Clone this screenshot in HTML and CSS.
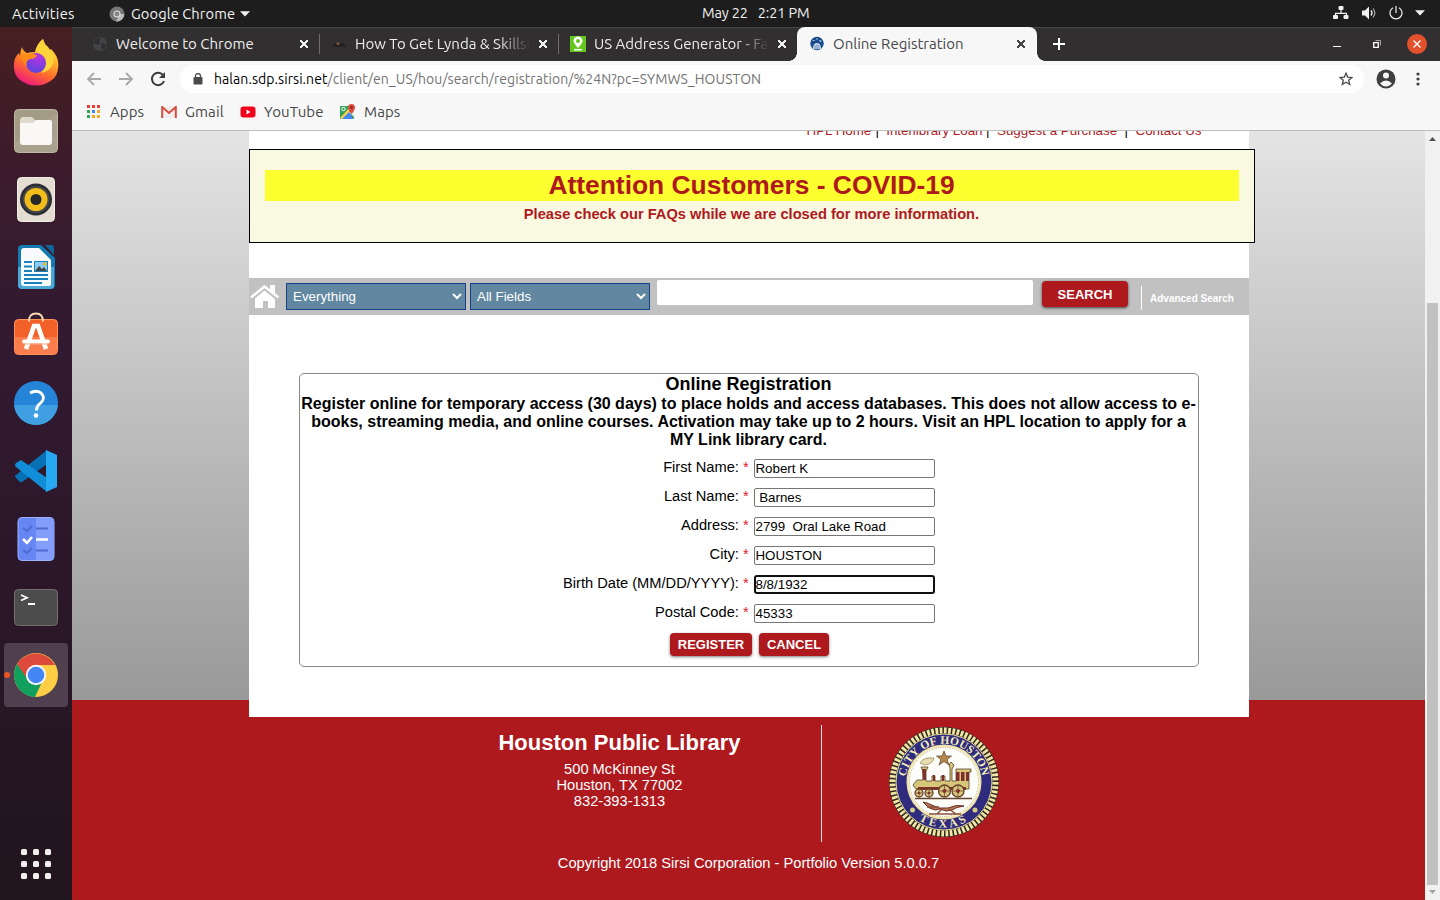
FILE: index.html
```html
<!DOCTYPE html>
<html lang="en">
<head>
<meta charset="utf-8">
<title>Online Registration</title>
<link rel="stylesheet" href="styles.css">
</head>
<body>
<header class="topbar">
  <span class="activities">Activities</span>
  <div class="appmenu">
    <svg width="16" height="16" viewBox="0 0 16 16"><circle cx="8" cy="8" r="7.5" fill="#777"/><path d="M8 8h7.3A7.5 7.5 0 0 1 7 15.4L10 10z" fill="#bbb"/><circle cx="8" cy="8" r="3.5" fill="#ddd"/><circle cx="8" cy="8" r="2.4" fill="#858585"/></svg>
    <span class="appname">Google Chrome</span>
    <svg width="10" height="6" viewBox="0 0 10 6"><path d="M0 .3h10L5 5.6z" fill="#f2f2f2"/></svg>
  </div>
  <div class="clock"><span>May 22</span><span>2:21 PM</span></div>
  <div class="tray">
    <svg width="16" height="14" viewBox="0 0 16 14"><path d="M8 3v4M2.5 11V7.3h11V11" fill="none" stroke="#f2f2f2" stroke-width="1.2"/><g fill="#f2f2f2"><rect x="5.5" y="0" width="5" height="4" rx="1"/><rect x="0" y="9" width="5" height="4" rx="1"/><rect x="10.500" y="9" width="5" height="4" rx="1"/></g></svg>
    <svg width="16" height="14" viewBox="0 0 16 14"><path d="M1 4.500h3L8 .500v13L4 9.500H1z" fill="#f2f2f2"/><path d="M10 4.500q2 2.500 0 5" fill="none" stroke="#f2f2f2" stroke-width="1.300"/><path d="M12 2.500q3.600 4.500 0 9" fill="none" stroke="#aaa" stroke-width="1.200"/></svg>
    <svg width="14" height="14" viewBox="0 0 14 14"><path d="M4 1.700a6 6 0 1 0 6 0M7 0v7" fill="none" stroke="#f2f2f2" stroke-width="1.200"/></svg>
    <svg width="10" height="6" viewBox="0 0 10 6"><path d="M0 .3h10L5 5.600z" fill="#f2f2f2"/></svg>
  </div>
</header>
<div class="desktop">
<aside class="dock">
  <div class="tile"><svg width="46" height="48" viewBox="0 0 46 48">
    <defs><linearGradient id="fx" x1=".8" y1="0" x2=".3" y2="1"><stop offset="0" stop-color="#fff44f"/><stop offset=".35" stop-color="#ffb52a"/><stop offset=".65" stop-color="#ff6b2c"/><stop offset="1" stop-color="#ee1780"/></linearGradient><radialGradient id="fp" cx=".6" cy=".2" r=".8"><stop offset="0" stop-color="#b833e1"/><stop offset="1" stop-color="#5b45dd"/></radialGradient></defs>
    <path d="M9 8q1 4 5 6 4-1 8-1Q23 6 30 0q1 5 5 8l1 4 2-2q9 9 7 19a22 17.500 0 0 1-44 0Q0 19 6 14l1 3q0-5 2-9z" fill="url(#fx)"/>
    <path d="M30 0q1 5 5 8 7 8 5 16t-12 10q8-9 3-17l-8-5q1-7 7-12z" fill="#ffd43a"/>
    <circle cx="23" cy="24" r="10" fill="url(#fp)"/><path d="M7 17q9-4 17-1-1 4-7 4-5 2-3 8-5-6-7-11z" fill="#ff8a16"/></svg></div>
  <div class="tile"><svg width="44" height="44" viewBox="0 0 44 44"><rect x=".5" y=".5" width="43" height="43" rx="4" fill="#a39b86" stroke="#bdb7a5"/><path d="M1 34 43 4v35q0 4-4 4H5q-4 0-4-4z" fill="#b1aa98" opacity=".5"/><path d="M6 12q0-4 3-4h9l4 4h10v6H6z" fill="#dedacd"/><path d="M6 14h13l3-3h14q2 0 2 2v20q0 3-3 3H9q-3 0-3-3z" fill="#f9f8f6"/></svg></div>
  <div class="tile"><svg width="38" height="45" viewBox="0 0 38 45"><rect x=".5" y=".5" width="37" height="44" rx="4" fill="#e3ddd2" stroke="#f2eee5"/><circle cx="19" cy="22.500" r="16" fill="#2c2e35"/><circle cx="19" cy="22.500" r="13.500" fill="#45474c"/><circle cx="19" cy="22.500" r="11.500" fill="#f1bd1b"/><circle cx="19" cy="22.500" r="5.500" fill="#262728"/></svg></div>
  <div class="tile"><svg width="38" height="46" viewBox="0 0 38 46"><path d="M5 1h19l14 13v27q0 4-4 4H5q-4 0-4-4V5q0-4 4-4z" fill="#137ab1"/><path d="M1 23h36v18q0 4-4 4H5q-4 0-4-4z" fill="#4aa9d6"/><path d="M28 1h6q3 0 3 3v7z" fill="#0d679b"/><path d="M7 4h15l12 12v24q0 2-2 2H7q-3 0-3-3V7q0-3 3-3z" fill="#f8fafb"/><path d="M7 18h8M7 22.500h8M7 27h8M7 31h24M7 35h24M7 39h18" stroke="#1683bc" stroke-width="1.800"/><rect x="17.500" y="17.500" width="13" height="10" fill="#8dcaf0" stroke="#1683bc"/><path d="m18 27 4-5 3 3 2-2 3 4z" fill="#444"/><circle cx="28" cy="20" r="1.700" fill="#e9b825"/></svg></div>
  <div class="tile"><svg width="44" height="46" viewBox="0 0 44 46"><rect x=".5" y="7.500" width="43" height="35" rx="4" fill="#f26127" stroke="#ff9459"/><path d="M1 25h42v13q0 4-4 4H5q-4 0-4-4z" fill="#fa7d4d"/><path d="M15 9.500q0-8 7-8t7 8" fill="none" stroke="#f9dcae" stroke-width="1.800"/><path d="m12 37 8-23h4l8 23" fill="none" stroke="#fff" stroke-width="4.600"/><path d="M10 29.500h24" stroke="#fff" stroke-width="4" stroke-linecap="round"/><path d="M10 32h24" stroke="#f4aa88" stroke-width="1"/></svg></div>
  <div class="tile"><svg width="44" height="44" viewBox="0 0 44 44"><circle cx="22" cy="22" r="22" fill="#2584d8"/><path d="M.1 24h43.800a22 22 0 0 1-43.800 0z" fill="#409fe2"/><path d="M16 12q6-3.500 11 0c5 5 1 9-1.500 11-3 2-3 4-3 6.500" fill="none" stroke="#fff" stroke-width="2.800"/><circle cx="22" cy="34.500" r="2.300" fill="#fff"/></svg></div>
  <div class="tile"><svg width="42" height="42" viewBox="0 0 42 42"><path d="M32 0v14L7 32q-2 1-3-1l-3-3q-2-2 0-3z" fill="#0870b5"/><path d="M32 42V28L6 10 1 13q-2 2 0 4z" fill="#118ed7"/><path d="M31 0 42 5v32L31 42z" fill="#27a8f3"/></svg></div>
  <div class="tile"><svg width="38" height="46" viewBox="0 0 38 46"><rect x="1" y="1.500" width="36" height="43" rx="4" fill="#6687f3" stroke="#9bb1ff"/><path d="M19 2h14q4 0 4 4v34q0 4-4 4H19z" fill="#829efa"/><path d="m6 12 4 3 5-5M6 34l4 3 5-5M19 12.500h12M19 34.500h12" fill="none" stroke="#4d6acd" stroke-width="1.800"/><path d="m6 23 4 4 5-6M19 23.500h12" fill="none" stroke="#fff" stroke-width="2.500"/></svg></div>
  <div class="tile"><svg width="44" height="37" viewBox="0 0 44 37"><rect x=".5" y=".5" width="43" height="36" rx="4" fill="#4c4c4c" stroke="#737069"/><path d="m7 6 6 2.800L7 11.500M14 15h7" fill="none" stroke="#fff" stroke-width="1.800"/></svg></div>
  <div class="tile tile-active"><i class="running"></i><svg width="46" height="46" viewBox="0 0 46 46"><circle cx="23" cy="23" r="22" fill="#ffce44"/><path d="M4 12A22 22 0 0 1 42 13H23L13.500 28.500z" fill="#dd4a3b"/><path d="M4 12a22 22 0 0 0 18 33l8-17H15z" fill="#109f5c"/><circle cx="23" cy="23" r="10.200" fill="#f4f6fb"/><circle cx="23" cy="23" r="8.300" fill="#4486f4"/></svg></div>
  <div class="showapps"><i></i><i></i><i></i><i></i><i></i><i></i><i></i><i></i><i></i></div>
</aside>
<main class="window">
  <div class="tabs">
    <div class="tab"><svg width="16" height="16" viewBox="0 0 16 16"><circle cx="8" cy="8" r="7" fill="#444446"/><path d="M2 5q4-4 7-3l-2 3 2 2-3 2-4-1zM10 7l4 1q0 4-4 6l-1-3z" fill="#303032"/></svg><span class="label">Welcome to Chrome</span><b class="x"></b></div>
    <div class="tab"><svg width="16" height="16" viewBox="0 0 16 16"><path d="M1 9.500h14v1H1z" fill="#171717"/><path d="M3 7h10v2H3z" fill="#222"/><circle cx="7" cy="7.500" r="1.500" fill="#87502e"/></svg><span class="label fade">How To Get Lynda &amp; Skillsh</span><b class="x"></b></div>
    <div class="tab"><svg width="16" height="16" viewBox="0 0 16 16"><path d="M0 0h16v16H0z" fill="#65c71e"/><path d="M8 12Q3.500 7 3.500 5a4.500 4.500 0 0 1 9 0Q12.500 7 8 12z" fill="#fff"/><circle cx="8" cy="5" r="2" fill="#65c71e"/><path d="M4 13.700h8" stroke="#fff" stroke-width="1.500"/></svg><span class="label fade">US Address Generator - Fak</span><b class="x"></b></div>
    <div class="tab tab-active"><svg width="16" height="16" viewBox="0 0 16 16"><circle cx="8" cy="7.500" r="6.700" fill="#174b8c"/><path d="m3 5 2-1 1 1zm7-1 3 1-2 1zM8 2l1 1-2 1zM4 13q0-6 4-6t4 6z" fill="#dce8f5"/><path d="M6 9v5m2-6v6m2-5v5" stroke="#5280b3"/></svg><span class="label">Online Registration</span><b class="x"></b></div>
    <svg class="plus" width="12" height="12" viewBox="0 0 12 12"><path d="M6 0v12M0 6h12" stroke="#fff" stroke-width="2"/></svg>
    <div class="winctl">
      <svg width="8" height="12" viewBox="0 0 8 12"><path d="M0 8.500h8" stroke="#fff"/></svg>
      <svg width="8" height="8" viewBox="0 0 8 8"><path d="M2.500 .500h5v5" fill="none" stroke="#aaa"/><path d="M.700 2.700h4.600v4.600H.700z" fill="none" stroke="#fff" stroke-width="1.300"/></svg>
      <svg width="20" height="20" viewBox="0 0 20 20"><circle cx="10" cy="10" r="10" fill="#e3512c"/><path d="m6.500 6.500 7 7m0-7-7 7" stroke="#fff" stroke-width="1.400"/></svg>
    </div>
  </div>
  <div class="toolbar">
    <svg width="16" height="16" viewBox="0 0 16 16"><path d="M15 8H2m6-6L2 8l6 6" fill="none" stroke="#a8a8a8" stroke-width="1.800"/></svg>
    <svg width="16" height="16" viewBox="0 0 16 16"><path d="M1 8h13M8 2l6 6-6 6" fill="none" stroke="#a8a8a8" stroke-width="1.800"/></svg>
    <svg width="16" height="16" viewBox="0 0 16 16"><path d="M13.300 4.500A6.200 6.200 0 1 0 14 10" fill="none" stroke="#3c3c3c" stroke-width="2"/><path d="M15 1v6H9z" fill="#3c3c3c"/></svg>
    <div class="omnibox">
      <svg width="10" height="12" viewBox="0 0 10 12"><path d="M2.500 5V3a2.500 2.500 0 0 1 5 0v2" fill="none" stroke="#4a4a4a" stroke-width="1.300"/><rect x=".500" y="4" width="9" height="7.500" rx="1" fill="#4a4a4a"/></svg>
      <span class="url"><b>halan.sdp.sirsi.net</b>/client/en_US/hou/search/registration/%24N?pc=SYMWS_HOUSTON</span>
      <svg class="star" width="14" height="14" viewBox="0 0 14 14"><path d="m7 1.200 1.700 3.900 4.200.4-3.200 2.800 1 4.200L7 10.300l-3.700 2.200 1-4.200-3.200-2.800 4.200-.4z" fill="none" stroke="#4a4a4a" stroke-width="1.300"/></svg>
    </div>
    <svg width="20" height="20" viewBox="0 0 20 20"><circle cx="10" cy="10" r="9.500" fill="#3f3f3f"/><circle cx="10" cy="6.500" r="3" fill="#f7f7f7"/><path d="M4 14.500q6-6 12 0-6 6-12 0z" fill="#f7f7f7"/></svg>
    <svg width="4" height="14" viewBox="0 0 4 14"><g fill="#3f3f3f"><circle cx="2" cy="2" r="1.600"/><circle cx="2" cy="7" r="1.600"/><circle cx="2" cy="12" r="1.600"/></g></svg>
  </div>
  <div class="bookmarks">
    <div class="bm bm-apps"><svg width="14" height="13" viewBox="0 0 14 13"><path d="M0 0h3v3H0zM5 0h3v3H5zM10 0h3v3h-3z" fill="#ea3c36"/><path d="M0 5h3v3H0zM0 10h3v3H0z" fill="#36a058"/><path d="M5 5h3v3H5z" fill="#4285f4"/><path d="M10 5h3v3h-3zM5 10h3v3H5zM10 10h3v3h-3z" fill="#f2ab21"/></svg><span>Apps</span></div>
    <div class="bm bm-gmail"><svg width="16" height="12" viewBox="0 0 16 12"><path d="M1 0h14v12H1z" fill="#eeeeed"/><path d="M1.200 12V1L8 7l6.800-6v11" fill="none" stroke="#d84c40" stroke-width="2"/></svg><span>Gmail</span></div>
    <div class="bm bm-yt"><svg width="16" height="12" viewBox="0 0 16 12"><rect width="15" height="11" x=".5" y=".5" rx="3" fill="#f4001c"/><path d="m6.500 3.500 4 2.500-4 2.500z" fill="#fff"/></svg><span>YouTube</span></div>
    <div class="bm bm-maps"><svg width="16" height="15" viewBox="0 0 16 15"><rect y="2" width="14" height="13" rx="1" fill="#34a05a"/><path d="M2 15 9 7l4 8z" fill="#4687f4"/><path d="m0 14 11-12 2 2L2 15z" fill="#fbd34c"/><path d="m9 8 5 5V6z" fill="#e5e7e9"/><path d="M11.500 10Q8 5.500 8 3.500a3.500 3.500 0 0 1 7 0q0 2-3.500 6.500z" fill="#df4b3e"/><circle cx="11.500" cy="3.500" r="1.300" fill="#7b231d"/><circle cx="3.500" cy="5" r="1.700" fill="none" stroke="#fff"/></svg><span>Maps</span></div>
  </div>
  <div class="viewport">
    <div class="page">
      <div class="content">
        <nav class="links"><div class="linkrow"><a>HPL Home</a><i class="bar1">|</i><a>Interlibrary Loan</a><i class="bar2">|</i><a>Suggest a Purchase</a><i class="bar3">|</i><a>Contact Us</a></div></nav>
        <section class="notice"><h1>Attention Customers - COVID-19</h1><p>Please check our FAQs while we are closed for more information.</p></section>
        <div class="searchbar">
          <svg class="home" width="30" height="24" viewBox="0 0 30 24"><path d="M5 13.500 14.500 5.500 25 14V23h-7v-7h-5v7H5z" fill="#fff"/><path d="M1 12.500 14.500 1.500 28.500 12.500" fill="none" stroke="#fff" stroke-width="2.600"/><path d="M20 0h5v9l-5-4z" fill="#fff"/><path d="M3.500 13 14.500 4 26 13" fill="none" stroke="#c1c1c1" stroke-width=".8"/></svg>
          <select><option>Everything</option></select>
          <select><option>All Fields</option></select>
          <input class="query" type="text">
          <button class="btn search">SEARCH</button>
          <a class="advanced">Advanced Search</a>
        </div>
        <form class="register">
          <h2>Online Registration</h2>
          <p class="intro">Register online for temporary access (30 days) to place holds and access databases. This does not allow access to e-<br>books, streaming media, and online courses. Activation may take up to 2 hours. Visit an HPL location to apply for a<br>MY Link library card.</p>
          <div class="row"><label>First Name: <em>*</em></label><input value="Robert K"></div>
          <div class="row"><label>Last Name: <em>*</em></label><input value=" Barnes"></div>
          <div class="row"><label>Address: <em>*</em></label><input value="2799  Oral Lake Road"></div>
          <div class="row"><label>City: <em>*</em></label><input value="HOUSTON"></div>
          <div class="row"><label>Birth Date (MM/DD/YYYY): <em>*</em></label><input class="focused" value="8/8/1932"></div>
          <div class="row"><label>Postal Code: <em>*</em></label><input value="45333"></div>
          <div class="actions"><button class="btn reg" type="button">REGISTER</button><button class="btn cancel" type="button">CANCEL</button></div>
        </form>
      </div>
      <footer class="footer">
        <div class="footcols">
          <div class="address"><h3>Houston Public Library</h3><p>500 McKinney St<br>Houston, TX 77002<br>832-393-1313</p></div>
          <svg width="112" height="112" viewBox="0 0 112 112">
            <defs><path id="arcTop" d="M17.200 71a41.500 41.500 0 1 1 77.600 0"/><path id="arcBottom" d="M10.500 56a45.500 45.500 0 0 0 91 0"/></defs>
            <circle cx="56" cy="56" r="55" fill="#2d2a28"/><circle cx="56" cy="56" r="51.500" fill="none" stroke="#f3e6a0" stroke-width="6" stroke-dasharray="2.700 1.550"/>
            <circle cx="56" cy="56" r="48" fill="#2f2c80" stroke="#e7da96"/>
            <circle cx="56" cy="56" r="36.500" fill="#fdfdf9" stroke="#eee2a4" stroke-width="2"/><circle cx="56" cy="56" r="34.500" fill="none" stroke="#b5a667" stroke-dasharray="1 1.300"/>
            <g class="sealtext"><text><textPath href="#arcTop" startOffset="50%" text-anchor="middle">CITY OF HOUSTON</textPath></text><text class="texas"><textPath href="#arcBottom" startOffset="50%" text-anchor="middle">TEXAS</textPath></text></g>
            <g fill="#d5cb83"><circle cx="24.500" cy="84" r="2.500"/><circle cx="87" cy="84" r="2.500"/></g>
            <path d="m56 25 2 5h5.500l-4.500 3.500 2 5.500-5-3.500-5 3.500 2-5.500-4.500-3.500H54z" fill="#b6874c" stroke="#574126" stroke-width=".7"/>
            <path d="M32 37q3-6 14-5-1 6-9 7z" fill="#e8ddb0" stroke="#94814e" stroke-width=".7"/>
            <path d="M33 41h7l-2 4v10h6v-5h3v5h6v-5h4v5h5V42l-1-3 2-3 3 3-2 4v12h4V43h15v3h-2v17H28l-3-4 4-5h6V45z" fill="#d6c679" stroke="#554127" stroke-width=".8"/>
            <path d="M34 43h4v11h-3zM68 46h3.500v9H68zm5 0h3.500v9H73zm5 0h3v9h-3zM30 61h48v3H30zM45 49h2v6h-2zm9 0h2v6h-2z" fill="#80302b"/>
            <g fill="#d5c57d" stroke="#664129" stroke-width="1.300"><circle cx="31" cy="67" r="4"/><circle cx="41" cy="67" r="4"/><circle cx="56.500" cy="65" r="6"/><circle cx="70" cy="65" r="6"/></g>
            <path d="M51 65h11m-5.500-5.500v11m8-5.500h11m-5.500-5.500v11M28 67h6m-3-3v6m7-3h6m-3-3v6" stroke="#664129" stroke-width=".7"/>
            <g fill="#80302b"><circle cx="31" cy="67" r="1.300"/><circle cx="41" cy="67" r="1.300"/><circle cx="56.500" cy="65" r="2"/><circle cx="70" cy="65" r="2"/></g>
            <path d="M27 72.500h57" stroke="#66442f" stroke-width="1.300"/><path d="m35 76 4 1 12 5h9q9-4 16-2-8 1-12 4l-6 1-6-2-5 1q-7-1-12-8z" fill="#bd7751" stroke="#682f27"/><path d="M39 81h12M41 88h32M54 83l-5 5m12-5 7 5" fill="none" stroke="#89503b" stroke-width="1.500"/>
          </svg>
        </div>
        <p class="copyright">Copyright 2018 Sirsi Corporation - Portfolio Version 5.0.0.7</p>
      </footer>
    </div>
    <div class="scrollbar"><svg width="7" height="4" viewBox="0 0 7 4"><path d="m0 4 3.500-4L7 4z" fill="#505050"/></svg><i class="thumb"></i><svg width="7" height="4" viewBox="0 0 7 4"><path d="m0 0 3.500 4L7 0z" fill="#a3a3a3"/></svg></div>
  </div>
</main>
</div>
</body>
</html>
```
FILE: styles.css
```css
* { box-sizing: border-box; }
body { margin: 0; width: 1440px; height: 900px; overflow: hidden; font-family: Ubuntu, "Noto Sans", sans-serif; }
svg { display: block; flex: none; }
h1, h2, h3, p { margin: 0; }

/* Desktop panel */
.topbar { height: 27px; background: #1d1d1d; color: #f2f2f2; display: grid; grid-template-columns: 109px 593px 1fr auto; align-items: center; font-size: 14.670px; line-height: 26px; white-space: nowrap; }
.activities { padding-left: 12px; letter-spacing: .25px; }
.appmenu { display: flex; align-items: center; gap: 6px; letter-spacing: .1px; }
.appmenu svg:last-child { margin-left: -1px; }
.clock { display: flex; gap: 10px; font-size: 14.500px; letter-spacing: -.15px; line-height: 24px; margin-top: -2px; }
.tray { display: flex; align-items: center; gap: 12px; padding-right: 15px; margin-top: -1px; }

.desktop { display: flex; height: 873px; }
.dock { width: 72px; padding: 4px; display: flex; flex-direction: column; gap: 4px; background: linear-gradient(#471f22, #3c1b2a 15%, #331a31 32%, #2c172a 60%, #21151d); }
.tile { height: 64px; flex: none; display: flex; align-items: center; justify-content: center; position: relative; border-radius: 4px; }
.tile-active { background: #50404f; }
.running { position: absolute; left: 0; top: 29px; width: 6px; height: 6px; border-radius: 50%; background: #e95420; }
.showapps { margin: auto auto 17px; display: grid; grid-template-columns: repeat(3, 6px); gap: 6px; }
.showapps i { height: 6px; border-radius: 1.500px; background: #f0efed; }

/* Browser frame */
.window { width: 1368px; display: flex; flex-direction: column; background: #f7f7f7; }
.tabs { height: 34px; padding-left: 9px; background: #322f30; border-top: 1px solid #454344; display: flex; align-items: center; }
.tab { width: 239px; height: 33px; display: flex; align-items: center; padding: 0 11px 1px; color: #ededed; font-size: 15px; position: relative; }
.label { margin-left: 8px; width: 175px; line-height: 20px; white-space: nowrap; overflow: hidden; }
.fade { -webkit-mask-image: linear-gradient(90deg, #000 82%, transparent); mask-image: linear-gradient(90deg, #000 82%, transparent); }
.tab:nth-child(-n+2)::after { content: ""; position: absolute; right: 0; top: 6px; width: 1px; height: 20px; background: #706e6f; }
.x { flex: none; margin-left: 9px; width: 8px; height: 8px; background: linear-gradient(45deg, transparent 42%, currentColor 43% 57%, transparent 58%), linear-gradient(-45deg, transparent 42%, currentColor 43% 57%, transparent 58%); }
.tab-active { height: 34px; margin: -1px 0 0 -1px; padding-left: 12px; padding-bottom: 0; width: 240px; border-radius: 8px 8px 0 0; background: #f7f7f7; color: #474747; }
.tab-active::before, .tab-active::after { content: ""; position: absolute; bottom: 0; width: 8px; height: 8px; }
.tab-active::before { left: -8px; background: radial-gradient(circle at 0 0, #322f30 7.500px, #f7f7f7 8px); }
.tab-active::after { right: -8px; background: radial-gradient(circle at 100% 0, #322f30 7.500px, #f7f7f7 8px); }
.plus { margin: -1px 0 0 16px; }
.winctl { margin-left: auto; display: flex; align-items: center; gap: 32px; padding-right: 13px; margin-top: -1px; }
.winctl svg:last-child { margin-left: -6px; }
.toolbar { height: 36px; display: flex; align-items: center; padding-left: 14px; gap: 16px; }
.omnibox { width: 1184px; height: 28px; margin-left: -2px; padding-left: 13px; border-radius: 14px; background: #fff; display: flex; align-items: center; color: #737373; font-size: 14px; }
.url { margin-left: 11px; white-space: nowrap; letter-spacing: .065px; }
.url b { font-weight: 400; color: #000; }
.star { margin-left: auto; margin-right: 11px; }
.omnibox + svg { margin-left: -4px; }
.omnibox + svg + svg { margin-left: 4px; }
.bookmarks { height: 34px; border-bottom: 1px solid #bdbdbd; padding: 0 0 4px 15px; display: flex; align-items: center; color: #474747; font-size: 15px; letter-spacing: .1px; }
.bm { display: flex; align-items: center; gap: 8px; height: 30px; }
.bm-apps { width: 74px; gap: 9px; }
.bm-gmail { width: 79px; }
.bm-yt { width: 100px; }

/* Library page */
.viewport { height: 769px; display: flex; font-family: "Liberation Sans", Arial, sans-serif; }
.page { width: 1353px; background: linear-gradient(#e4e4e4, #999 569px, #ae191e 569px); }
.content { width: 1000px; height: 586px; margin-left: 177px; background: #fff; }
.links { height: 18px; overflow: hidden; }
.linkrow { margin-top: -9px; padding-right: 47.500px; display: flex; justify-content: flex-end; line-height: 18px; font-size: 13.330px; color: #ae191e; }
.linkrow i { font-style: normal; color: #000; text-align: center; width: 15px; }
.linkrow .bar1 { padding-right: 3px; }
.linkrow .bar2 { padding-right: 4px; width: 14.500px; }
.linkrow .bar3 { width: 18.500px; }
.notice { width: 1006px; height: 94px; border: 1px solid #000; background: #f9f8e1; padding: 20px 16px 20px 15px; text-align: center; font-weight: 700; color: #ae191e; }
.notice h1 { height: 31px; line-height: 31px; background: #fdff2f; font-size: 26.400px; width: 974px; padding-right: 1px; }
.notice p { font-size: 14.670px; line-height: 17px; margin-top: 5px; }
.searchbar { margin-top: 35px; height: 37px; background: #c1c1c1; display: flex; align-items: flex-start; padding-left: 1px; }
.home { margin: 7px 6px 0 0; }
select { width: 180px; height: 27px; margin: 5px 4px 0 0; padding: 0 0 0 2px; border: 1px solid #15408b; border-radius: 0; background: #6187a1; color: #fff; font: 13.330px "Liberation Sans", Arial, sans-serif; }
.query { width: 376px; height: 25px; margin: 2px 0 0 3px; border: 0; border-radius: 2px; background: #fff; }
.btn { border: 0; padding: 0; border-radius: 4px; background: #ae191e; color: #fff; font: bold 13px "Liberation Sans", Arial, sans-serif; box-shadow: 0 1px 3px #777; height: 23px; }
.search { width: 86px; height: 26px; margin: 3px 0 0 9px; box-shadow: 0 1px 3px #444; }
.advanced { margin: 8px 0 0 13px; padding-left: 8px; height: 24px; border-left: 1px solid #fff; color: #fff; font-size: 10px; font-weight: 700; line-height: 25px; white-space: nowrap; }
.register { width: 900px; height: 294px; margin: 58px 0 0 50px; border: 1px solid #888; border-radius: 5px; }
.register h2 { font-size: 18px; line-height: 20px; text-align: center; padding-right: 1px; }
.intro { margin-top: 1px; padding-right: 1px; font-size: 16px; line-height: 18px; font-weight: 700; text-align: center; white-space: nowrap; }
.row { display: flex; height: 29px; align-items: center; }
.intro + .row { margin-top: 5px; }
.row label { width: 448.700px; margin: -3px 5.300px 0 0; text-align: right; font-size: 14.670px; }
.row em { color: #e9202a; font-style: normal; }
.row input { width: 181px; height: 19px; padding: 1px .500px; border: 1px solid #767676; border-radius: 2px; background: #fff; font: 13.330px "Liberation Sans", Arial, sans-serif; color: #000; }
.row .focused { border: 2px solid #101010; padding: 0; border-radius: 3px; text-indent: -.5px; }
.actions { display: flex; gap: 7px; margin: 5px 0 0 370px; }
.reg { width: 82px; }
.cancel { width: 70px; }
.footer { margin-left: 177px; width: 1000px; color: #fff; text-align: center; }
.footcols { padding: 8px 0 0 169px; display: flex; }
.address { width: 404px; height: 117px; border-right: 1px solid #f2dede; }
.footcols svg { margin: 1px 0 0 65.500px; }
.address h3 { font-size: 22px; line-height: 26px; padding-top: 5px; }
.address p { margin-top: 5px; font-size: 14.670px; line-height: 16px; }
.copyright { margin-top: 12px; padding-right: 1px; font-size: 14.670px; line-height: 18px; }
.sealtext { fill: #f6edb7; font: bold 11.500px "Liberation Serif", serif; letter-spacing: .7px; }
.sealtext { transform: none; }
.sealtext text { baseline-shift: 0; dominant-baseline: middle; }
.sealtext .texas { letter-spacing: 3px; dominant-baseline: auto; }
.scrollbar { width: 15px; background: #f1f1f1; display: flex; flex-direction: column; align-items: center; padding: 6px 0; }
.thumb { width: 11px; height: 582px; margin-top: 162px; background: #c1c1c1; }
.thumb + svg { margin-top: 5px; }
```
